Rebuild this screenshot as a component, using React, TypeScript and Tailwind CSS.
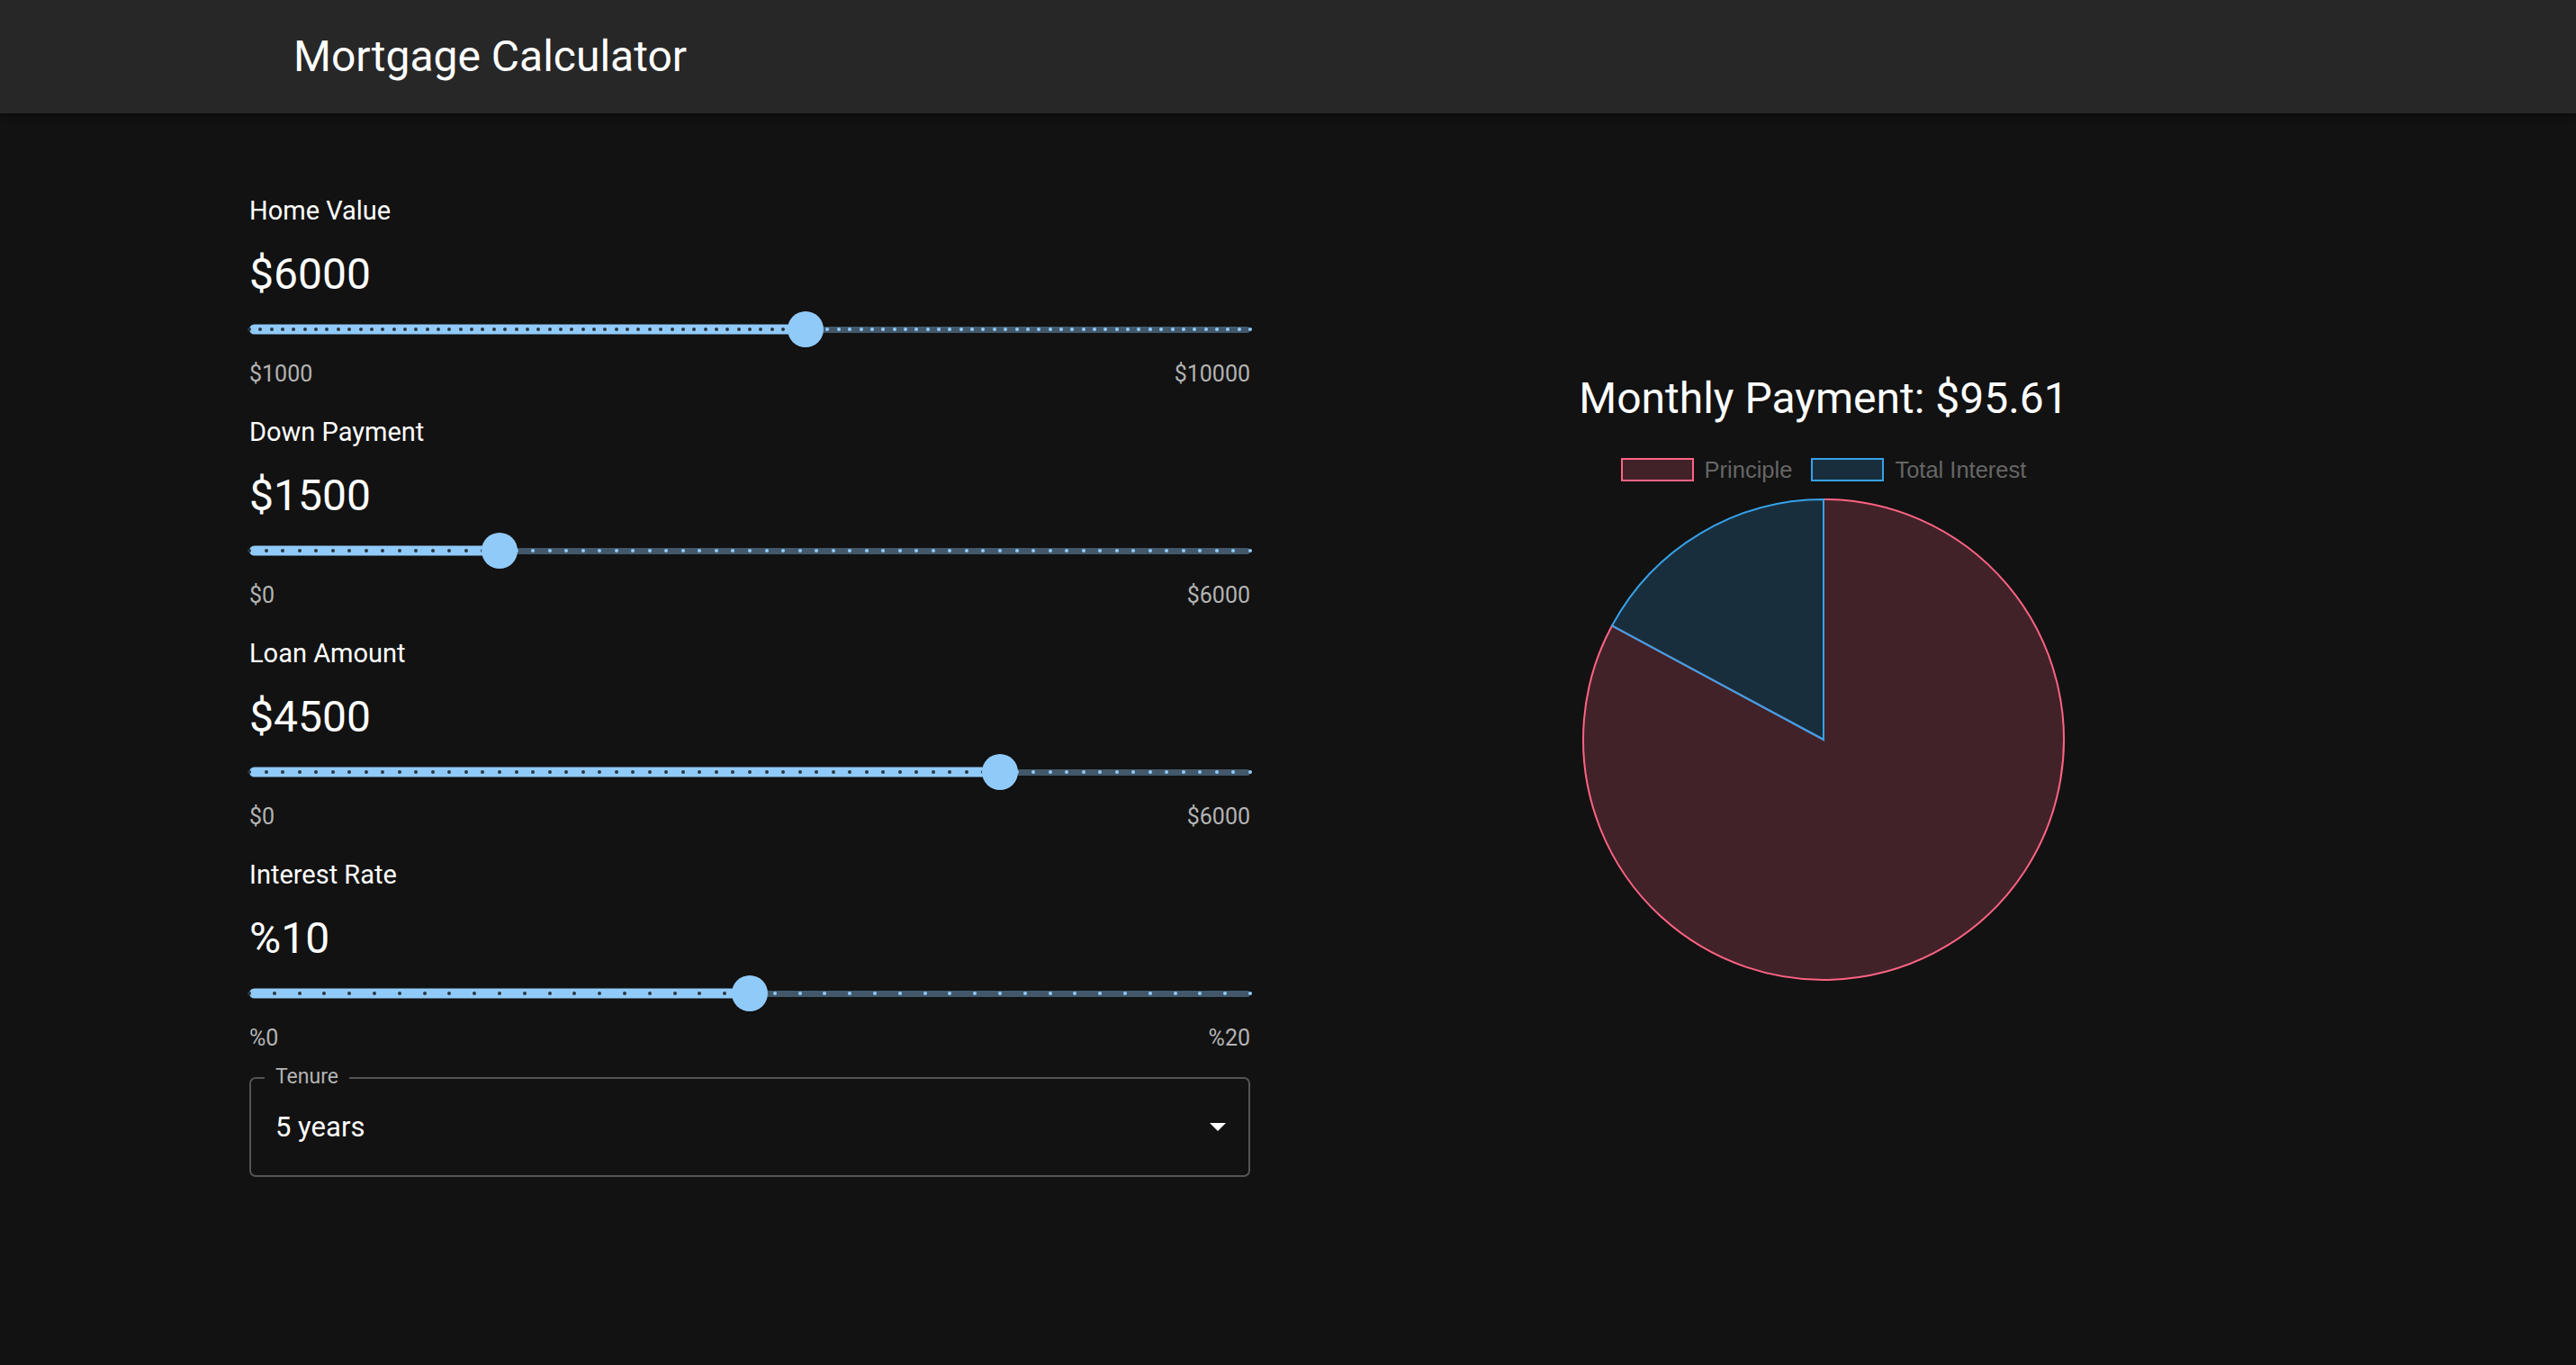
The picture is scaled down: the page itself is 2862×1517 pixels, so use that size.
import React from 'react'

interface SliderField {
  label: string
  display: string
  min: number
  max: number
  step: number
  value: number
  minLabel: string
  maxLabel: string
}

const fields: SliderField[] = [
  { label: 'Home Value', display: '$6000', min: 1000, max: 10000, step: 100, value: 6000, minLabel: '$1000', maxLabel: '$10000' },
  { label: 'Down Payment', display: '$1500', min: 0, max: 6000, step: 100, value: 1500, minLabel: '$0', maxLabel: '$6000' },
  { label: 'Loan Amount', display: '$4500', min: 0, max: 6000, step: 100, value: 4500, minLabel: '$0', maxLabel: '$6000' },
  { label: 'Interest Rate', display: '%10', min: 0, max: 20, step: 0.5, value: 10, minLabel: '%0', maxLabel: '%20' },
]

function Slider({ min, max, step, value }: { min: number; max: number; step: number; value: number }) {
  const pct = ((value - min) / (max - min)) * 100
  const count = Math.round((max - min) / step)
  const marks = Array.from({ length: count + 1 }, (_, i) => (i / count) * 100)

  return (
    <div className="relative flex h-[46px] items-center">
      <div className="h-[7px] w-full rounded-full bg-[#42586a]" />
      <div
        className="absolute left-0 top-1/2 h-[11px] -translate-y-1/2 rounded-full bg-[#90caf9]"
        style={{ width: `${pct}%` }}
      />
      {marks.map((m, i) => (
        <span
          key={i}
          className={`absolute top-1/2 h-[4px] w-[4px] -translate-x-1/2 -translate-y-1/2 rounded-full ${
            m <= pct ? 'bg-[#2b3740]' : 'bg-[#90caf9]'
          }`}
          style={{ left: `${m}%` }}
        />
      ))}
      <span
        className="absolute top-1/2 h-[40px] w-[40px] -translate-x-1/2 -translate-y-1/2 rounded-full bg-[#90caf9] shadow-[0_3px_2px_-2px_rgba(0,0,0,0.3)]"
        style={{ left: `${pct}%` }}
      />
    </div>
  )
}

function PieChart() {
  const cx = 270
  const cy = 270
  const r = 267
  // interest slice: 61.7deg counter-clockwise from the top
  const a = (61.7 * Math.PI) / 180
  const px = cx - r * Math.sin(a)
  const py = cy - r * Math.cos(a)

  return (
    <svg width="540" height="540" viewBox="0 0 540 540">
      <path
        d={`M ${cx} ${cy} L ${cx} ${cy - r} A ${r} ${r} 0 1 1 ${px} ${py} Z`}
        fill="rgba(255,99,132,0.2)"
        stroke="rgb(255,99,132)"
        strokeWidth="2"
      />
      <path
        d={`M ${cx} ${cy} L ${px} ${py} A ${r} ${r} 0 0 1 ${cx} ${cy - r} Z`}
        fill="rgba(54,162,235,0.2)"
        stroke="rgb(54,162,235)"
        strokeWidth="2"
      />
    </svg>
  )
}

export default function App() {
  return (
    <div className="min-h-screen bg-[#121212] font-['Roboto',sans-serif] text-white">
      {/* App bar */}
      <header className="flex h-[126px] items-center bg-[#272727] pl-[326px] shadow-[0_2px_4px_-1px_rgba(0,0,0,0.2),0_4px_5px_0_rgba(0,0,0,0.14),0_1px_10px_0_rgba(0,0,0,0.12)]">
        <h1 className="text-[48px] leading-[62px] font-normal">Mortgage Calculator</h1>
      </header>

      <main className="flex pl-[277px] pt-[87px]">
        {/* Inputs */}
        <div className="flex w-[1112px] flex-col">
          {fields.map((f) => (
            <section key={f.label} className="mb-[20px] flex flex-col">
              <div className="h-[40px] text-[29px] leading-[42px]">{f.label}</div>
              <div className="mt-[10px] h-[80px] text-[48px] leading-[84px]">{f.display}</div>
              <Slider min={f.min} max={f.max} step={f.step} value={f.value} />
              <div className="flex h-[50px] items-center justify-between pt-[4px] text-[25px] text-[#b3b3b3]">
                <span>{f.minLabel}</span>
                <span>{f.maxLabel}</span>
              </div>
            </section>
          ))}

          {/* Tenure select */}
          <div className="relative flex h-[111px] items-center justify-between rounded-[7px] border-2 border-[#545454] pl-[27px] pr-[25px]">
            <span className="absolute left-[15px] top-[-14px] bg-[#121212] px-[12px] text-[23px] leading-[24px] text-[#b3b3b3]">
              Tenure
            </span>
            <span className="text-[31px] leading-[42px]">5 years</span>
            <svg width="18" height="9" viewBox="0 0 18 9">
              <path d="M0 0 L18 0 L9 9 Z" fill="#ffffff" />
            </svg>
          </div>
        </div>

        {/* Chart */}
        <div className="flex w-[1274px] flex-col items-center pt-[199px]">
          <div className="h-[60px] text-[48px] leading-[62px]">Monthly Payment: $95.61</div>
          <div className="mt-[37px] flex h-[26px] items-center font-['Liberation_Sans',Arial,sans-serif] text-[25.5px] text-[#666666]">
            <span className="h-[26px] w-[81px] border-2 border-[rgb(255,99,132)] bg-[rgba(255,99,132,0.2)]" />
            <span className="ml-[12px]">Principle</span>
            <span className="ml-[21px] h-[26px] w-[81px] border-2 border-[rgb(54,162,235)] bg-[rgba(54,162,235,0.2)]" />
            <span className="ml-[12px]">Total Interest</span>
          </div>
          <div className="mt-[17px]">
            <PieChart />
          </div>
        </div>
      </main>
    </div>
  )
}
